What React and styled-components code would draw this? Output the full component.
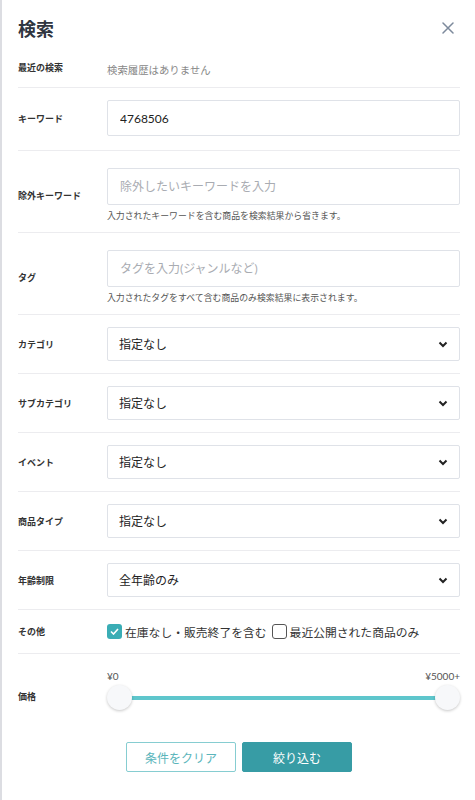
import React, {useState} from 'react';
import styled, {createGlobalStyle} from 'styled-components';

const GlobalStyle = createGlobalStyle`
  * { box-sizing: border-box; }
  body {
    margin: 0;
    background: #fff;
    font-family: Lato, "Noto Sans CJK JP", sans-serif;
    color: #333;
  }
`;

const Page = styled.div`
  min-height: 800px;
  border-left: 2px solid #dcdde2;
  padding: 0 15px 0 16px;
  background: #fff;
`;

const Header = styled.div`
  display: flex;
  justify-content: space-between;
  align-items: center;
  height: 47px;
  padding-top: 8px;
`;

const Title = styled.h1`
  margin: 0;
  font-size: 18px;
  font-weight: 700;
  color: #2f3540;
  font-family: "Noto Sans CJK JP", sans-serif;
`;

const CloseButton = styled.button`
  border: none;
  background: none;
  padding: 0;
  margin-right: 6px;
  display: flex;
  cursor: pointer;
`;

const Row = styled.div`
  display: flex;
  align-items: center;
  padding: ${p => p.$pad || '12px 0'};
  border-bottom: ${p => (p.$last ? 'none' : '1px solid #ececef')};
  min-height: ${p => p.$min || 'auto'};
`;

const Label = styled.div`
  width: 89px;
  flex-shrink: 0;
  font-size: 9px;
  font-weight: 700;
  color: #333;
  font-family: "Noto Sans CJK JP", sans-serif;
`;

const Content = styled.div`
  flex: 1;
  min-width: 0;
`;

const Muted = styled.span`
  font-size: 10.4px;
  color: #888;
`;

const Input = styled.input`
  width: 100%;
  height: ${p => p.$h || '36px'};
  border: 1px solid #dfe2e8;
  border-radius: 2px;
  padding: 0 12px;
  font-size: 12px;
  font-family: inherit;
  color: #222;
  outline: none;
  &::placeholder { color: #a9acb2; }
`;

const Help = styled.div`
  margin-top: 5px;
  font-size: 8.9px;
  line-height: 12px;
  color: #555;
`;

const SelectWrap = styled.div`
  position: relative;
`;

const Select = styled.select`
  width: 100%;
  height: 34px;
  appearance: none;
  border: 1px solid #dfe2e8;
  border-radius: 2px;
  background: #fff;
  padding: 0 30px 0 11px;
  font-size: 12px;
  font-family: inherit;
  color: #222;
  outline: none;
`;

const Chevron = styled.svg`
  position: absolute;
  right: 12px;
  top: 14px;
  pointer-events: none;
`;

const Checks = styled.div`
  display: flex;
  align-items: center;
  gap: 5px;
  font-size: 11.8px;
  color: #333;
`;

const CheckLabel = styled.label`
  display: flex;
  align-items: center;
  gap: 3px;
  cursor: pointer;
  white-space: nowrap;
`;

const Box = styled.span`
  width: 15px;
  height: 15px;
  border-radius: 3px;
  display: inline-flex;
  align-items: center;
  justify-content: center;
  background: ${p => (p.$on ? '#3aadb5' : '#fff')};
  border: ${p => (p.$on ? 'none' : '1px solid #555')};
`;

const PriceTop = styled.div`
  display: flex;
  justify-content: space-between;
  font-size: 10px;
  color: #555;
  height: 14px;
  line-height: 14px;
`;

const Slider = styled.div`
  position: relative;
  height: 28px;
  margin-top: 1px;
`;

const Track = styled.div`
  position: absolute;
  left: 12px;
  right: 12px;
  top: 12px;
  height: 4px;
  background: #5ec6cc;
`;

const Thumb = styled.div`
  position: absolute;
  top: 1px;
  ${p => (p.$right ? 'right: 0;' : 'left: 0;')}
  width: 25px;
  height: 25px;
  border-radius: 50%;
  background: #f7f8fa;
  box-shadow: 0 1px 3px rgba(0, 0, 0, 0.22);
`;

const Actions = styled.div`
  display: flex;
  justify-content: center;
  gap: 6px;
  padding-top: 30px;
`;

const Button = styled.button`
  width: 110px;
  height: 30px;
  border-radius: 2px;
  font-size: 12px;
  font-family: inherit;
  cursor: pointer;
  border: 1px solid ${p => (p.$primary ? '#379ca5' : '#86cdd1')};
  background: ${p => (p.$primary ? '#379ca5' : '#fff')};
  color: ${p => (p.$primary ? '#fff' : '#5ab5bb')};
`;

const selects = [
  ['カテゴリ', '指定なし'],
  ['サブカテゴリ', '指定なし'],
  ['イベント', '指定なし'],
  ['商品タイプ', '指定なし'],
  ['年齢制限', '全年齢のみ'],
];

const App = () => {
  const [stock, setStock] = useState(true);
  const [recent, setRecent] = useState(false);

  return (
    <Page>
      <GlobalStyle />
      <Header>
        <Title>検索</Title>
        <CloseButton aria-label='close'>
          <svg width='12' height='12' viewBox='0 0 12 12'>
            <path d='M1 1L11 11M11 1L1 11' stroke='#7d8a9c' strokeWidth='1.5' strokeLinecap='round' />
          </svg>
        </CloseButton>
      </Header>

      <Row $pad='0' $min='41px'>
        <Label>最近の検索</Label>
        <Content><Muted>検索履歴はありません</Muted></Content>
      </Row>

      <Row $pad='12px 0 14px'>
        <Label>キーワード</Label>
        <Content><Input defaultValue='4768506' /></Content>
      </Row>

      <Row $pad='17px 0 10px'>
        <Label>除外キーワード</Label>
        <Content>
          <Input $h='37px' placeholder='除外したいキーワードを入力' />
          <Help>入力されたキーワードを含む商品を検索結果から省きます。</Help>
        </Content>
      </Row>

      <Row $pad='17px 0 10px'>
        <Label>タグ</Label>
        <Content>
          <Input $h='37px' placeholder='タグを入力(ジャンルなど)' />
          <Help>入力されたタグをすべて含む商品のみ検索結果に表示されます。</Help>
        </Content>
      </Row>

      {selects.map(([label, value]) => (
        <Row key={label} $pad='12px 0 12px'>
          <Label>{label}</Label>
          <Content>
            <SelectWrap>
              <Select defaultValue={value}>
                <option>{value}</option>
              </Select>
              <Chevron width='10' height='7' viewBox='0 0 10 7'>
                <path d='M1.5 1.5L5 5L8.5 1.5' fill='none' stroke='#222' strokeWidth='2' />
              </Chevron>
            </SelectWrap>
          </Content>
        </Row>
      ))}

      <Row $pad='0' $min='44px'>
        <Label>その他</Label>
        <Content>
          <Checks>
            <CheckLabel onClick={() => setStock(!stock)}>
              <Box $on={stock}>
                {stock && (
                  <svg width='9' height='7' viewBox='0 0 9 7'>
                    <path d='M1 3.5L3.5 6L8 1' fill='none' stroke='#fff' strokeWidth='1.6' />
                  </svg>
                )}
              </Box>
              在庫なし・販売終了を含む
            </CheckLabel>
            <CheckLabel onClick={() => setRecent(!recent)}>
              <Box $on={recent} />
              最近公開された商品のみ
            </CheckLabel>
          </Checks>
        </Content>
      </Row>

      <Row $pad='15px 0 0' $last>
        <Label style={{paddingTop: 12}}>価格</Label>
        <Content>
          <PriceTop><span>¥0</span><span>¥5000+</span></PriceTop>
          <Slider>
            <Track />
            <Thumb />
            <Thumb $right />
          </Slider>
        </Content>
      </Row>

      <Actions>
        <Button>条件をクリア</Button>
        <Button $primary>絞り込む</Button>
      </Actions>
    </Page>
  );
};

export default App;
